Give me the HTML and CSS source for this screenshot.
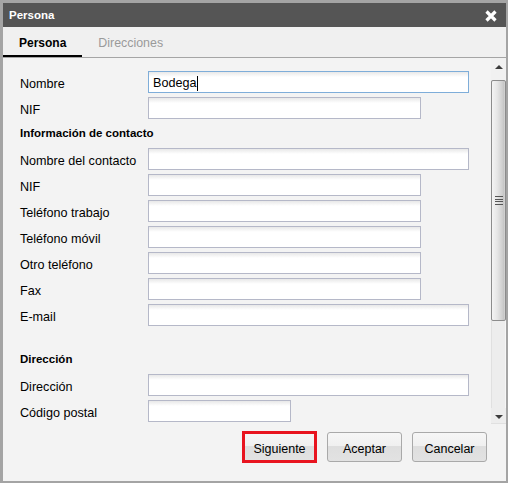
FILE: index.html
```html
<!DOCTYPE html>
<html lang="es">
<head>
<meta charset="utf-8">
<title>Persona</title>
<link rel="stylesheet" href="styles.css">
</head>
<body>
<div class="window">
  <div class="titlebar">
    <span class="title">Persona</span>
    <svg class="close" width="12" height="12" viewBox="0 0 12 12"><path d="M1.5 1.5 L10.5 10.5 M10.5 1.5 L1.5 10.5" stroke="#fff" stroke-width="3.2" fill="none"/></svg>
  </div>
  <div class="tabs">
    <div class="tab active">Persona</div>
    <div class="tab">Direcciones</div>
  </div>
  <div class="body">
    <div class="form">
      <div class="row"><span class="lbl">Nombre</span><div class="field long focus">Bodega<span class="caret"></span></div></div>
      <div class="row"><span class="lbl">NIF</span><input class="field mid" type="text"></div>
      <div class="section">Información de contacto</div>
      <div class="row"><span class="lbl">Nombre del contacto</span><input class="field long" type="text"></div>
      <div class="row"><span class="lbl">NIF</span><input class="field mid" type="text"></div>
      <div class="row"><span class="lbl">Teléfono trabajo</span><input class="field mid" type="text"></div>
      <div class="row"><span class="lbl">Teléfono móvil</span><input class="field mid" type="text"></div>
      <div class="row"><span class="lbl">Otro teléfono</span><input class="field mid" type="text"></div>
      <div class="row"><span class="lbl">Fax</span><input class="field mid" type="text"></div>
      <div class="row"><span class="lbl">E-mail</span><input class="field long" type="text"></div>
      <div class="section spaced">Dirección</div>
      <div class="row"><span class="lbl">Dirección</span><input class="field long" type="text"></div>
      <div class="row"><span class="lbl">Código postal</span><input class="field short" type="text"></div>
    </div>
    <div class="scrollbar">
      <div class="sb-up"><span class="tri-up"></span></div>
      <div class="sb-thumb"><span class="grip"></span></div>
      <div class="sb-track"></div>
      <div class="sb-down"><span class="tri-down"></span></div>
    </div>
  </div>
  <div class="footer">
    <button class="btn next" type="button">Siguiente</button>
    <button class="btn" type="button">Aceptar</button>
    <button class="btn" type="button">Cancelar</button>
  </div>
</div>
</body>
</html>
```

FILE: styles.css
```css
html, body {
  margin: 0;
  padding: 0;
  background: #ffffff;
}

body {
  font-family: "Liberation Sans", Arial, sans-serif;
  color: #000;
}

.window {
  width: 508px;
  height: 483px;
  box-sizing: border-box;
  border: 3px solid #a4a4a4;
  border-right-width: 2px;
  border-bottom-width: 2px;
  display: flex;
  flex-direction: column;
  background: #f3f3f3;
}

.titlebar {
  height: 24px;
  background: #555555;
  display: flex;
  align-items: center;
  justify-content: space-between;
  padding: 0 9px 0 6px;
  flex: none;
}

.title {
  color: #fff;
  font-weight: bold;
  font-size: 11.5px;
}

.close {
  display: block;
  margin-top: 1px;
}

.tabs {
  height: 31px;
  box-sizing: border-box;
  background: #f0f0f0;
  border-bottom: 1px solid #a5a5a5;
  display: flex;
  flex: none;
}

.tab {
  height: 30px;
  box-sizing: border-box;
  padding: 2px 16px 0;
  line-height: 28px;
  font-size: 12.4px;
  color: #9a9a9a;
}

.tab.active {
  color: #000;
  font-weight: bold;
  font-size: 12px;
  box-shadow: inset 0 -2px 0 #000;
}

.body {
  height: 366px;
  display: flex;
  flex: none;
}

.form {
  flex: 1;
  overflow: hidden;
  padding: 13px 0 0 17px;
  background: #f3f3f3;
}

.row {
  display: flex;
  align-items: center;
  height: 22px;
  margin-bottom: 4px;
}

.lbl {
  width: 128px;
  flex: none;
  font-size: 12.6px;
  padding-top: 3px;
}

.field {
  box-sizing: border-box;
  height: 22px;
  margin: 0;
  border: 1px solid #b5b8c8;
  background: linear-gradient(to bottom, #e8e8e8 0, #ffffff 5px, #ffffff 100%);
  padding: 0 4px;
  font-family: "Liberation Sans", Arial, sans-serif;
  font-size: 12.6px;
  line-height: 20px;
  outline: none;
  border-radius: 0;
}

.field.long { width: 321px; }
.field.mid { width: 273px; }
.field.short { width: 143px; }

.field.focus {
  border-color: #7eadd9;
  display: flex;
  align-items: center;
  padding-top: 2px;
}

.caret {
  display: inline-block;
  width: 1px;
  height: 15px;
  background: #000;
  margin-left: 1px;
}

.section {
  height: 25px;
  box-sizing: border-box;
  padding-top: 2px;
  line-height: 16px;
  font-size: 11.5px;
  font-weight: bold;
}

.section.spaced {
  height: 44px;
  padding-top: 21px;
}

.scrollbar {
  width: 15px;
  flex: none;
  display: flex;
  flex-direction: column;
  background: #ececec;
  box-shadow: inset 1px 0 0 #e2e2e2;
}

.sb-up {
  height: 22px;
  display: flex;
  justify-content: center;
  padding-top: 7px;
  box-sizing: border-box;
  background: #f1f1f1;
}

.tri-up {
  width: 0;
  height: 0;
  border-left: 4px solid transparent;
  border-right: 4px solid transparent;
  border-bottom: 4px solid #3c3c3c;
}

.sb-thumb {
  height: 241px;
  box-sizing: border-box;
  border: 1px solid #8c8c8c;
  border-radius: 2px;
  background: linear-gradient(to right, #f4f4f4 0, #e6e6e6 40%, #cfcfcf 80%, #c4c4c4 92%, #dcdcdc 100%);
  display: flex;
  align-items: center;
  justify-content: center;
}

.grip {
  width: 8px;
  height: 9px;
  background: repeating-linear-gradient(to bottom, #555 0, #555 1px, transparent 1px, transparent 2.7px);
}

.sb-track {
  flex: 1;
  background: #ededed;
  box-shadow: inset 1px 0 0 #e0e0e0, inset -1px 0 0 #f6f6f6;
}

.sb-down {
  height: 16px;
  display: flex;
  justify-content: center;
  align-items: flex-start;
  padding-top: 7px;
  box-sizing: border-box;
  background: #ededed;
  box-shadow: inset 0 -1px 0 #e0e0e0;
}

.tri-down {
  width: 0;
  height: 0;
  border-left: 4px solid transparent;
  border-right: 4px solid transparent;
  border-top: 4px solid #3c3c3c;
}

.footer {
  flex: 1;
  display: flex;
  justify-content: flex-end;
  align-items: flex-start;
  gap: 10px;
  padding: 8px 19px 0 0;
  background: #f3f3f3;
}

.btn {
  width: 75px;
  height: 30px;
  box-sizing: border-box;
  border: 1px solid #a9a9a9;
  border-radius: 3px;
  background: linear-gradient(to bottom, #f6f6f6 0, #f0f0f0 45%, #dedede 48%, #e2e2e2 100%);
  font-family: "Liberation Sans", Arial, sans-serif;
  font-size: 12.5px;
  color: #000;
  padding: 3px 0 0;
  margin: 0;
}

.btn.next {
  height: 32px;
  margin-top: -1px;
  border: 3px solid #e8141f;
  border-radius: 0;
}
```
